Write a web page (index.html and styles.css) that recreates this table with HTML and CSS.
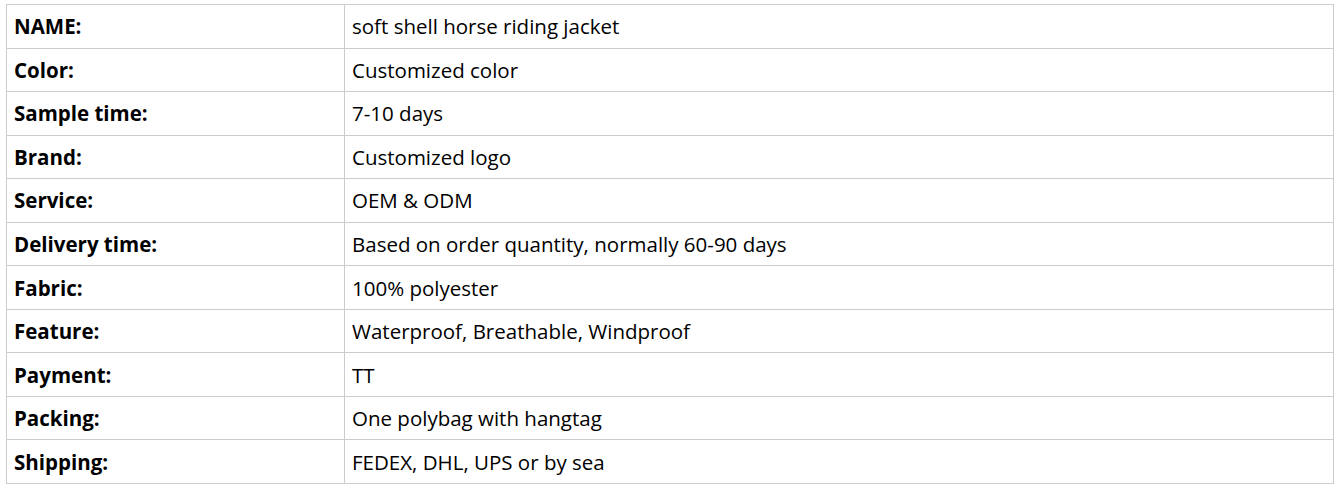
FILE: index.html
```html
<!DOCTYPE html>
<html lang="en">
<head>
    <meta charset="UTF-8" />
    <title>Product Specs</title>
    <link rel="stylesheet" href="styles.css">
</head>
<body>
    <!-- Product spec table -->
    <table class="spec-table">
        <tbody>
            <tr><td class="label">NAME:</td><td>soft shell horse riding jacket</td></tr>
            <tr><td class="label">Color:</td><td>Customized color</td></tr>
            <tr><td class="label">Sample time:</td><td>7-10 days</td></tr>
            <tr><td class="label">Brand:</td><td>Customized logo</td></tr>
            <tr><td class="label">Service:</td><td>OEM &amp; ODM</td></tr>
            <tr><td class="label">Delivery time:</td><td>Based on order quantity, normally 60-90 days</td></tr>
            <tr><td class="label">Fabric:</td><td>100% polyester</td></tr>
            <tr><td class="label">Feature:</td><td>Waterproof, Breathable, Windproof</td></tr>
            <tr><td class="label">Payment:</td><td>TT</td></tr>
            <tr><td class="label">Packing:</td><td>One polybag with hangtag</td></tr>
            <tr><td class="label">Shipping:</td><td>FEDEX, DHL, UPS or by sea</td></tr>
        </tbody>
    </table>
</body>
</html>
```

FILE: styles.css
```css
body {
    font-family: 'Open Sans', sans-serif;
    background-color: #fff;
    color: #000;
    margin: 4px 5px 0 6px;
}

.spec-table {
    width: 100%;
    border-collapse: collapse;
    font-size: 20.5px;
}

.spec-table td {
    border: 1px solid #cccccc;
    height: 43.55px;
    padding: 0 8px 0 7px;
    box-sizing: border-box;
    vertical-align: middle;
}

.spec-table td.label {
    width: 338px;
    font-weight: bold;
    padding-left: 7px;
}
```
